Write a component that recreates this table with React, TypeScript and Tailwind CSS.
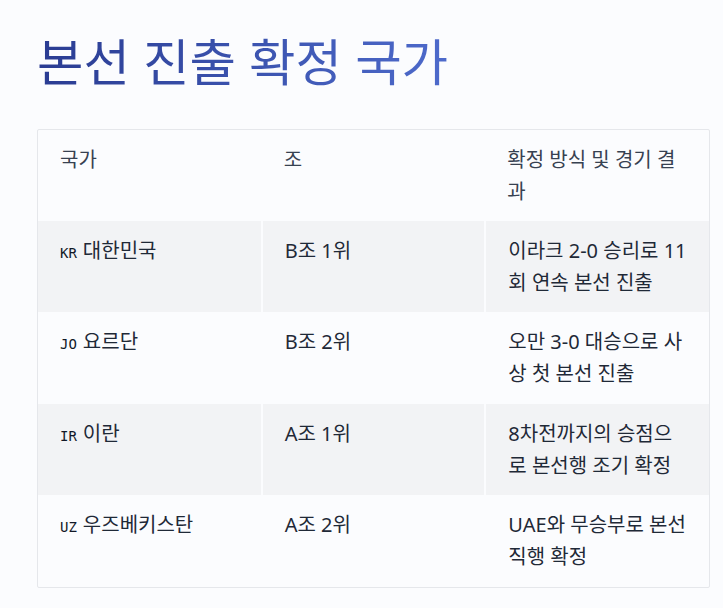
import React from 'react';

interface Row {
    code: string;
    name: string;
    group: string;
    result: string;
}

const rows: Row[] = [
    { code: 'KR', name: '대한민국', group: 'B조 1위', result: '이라크 2-0 승리로 11회 연속 본선 진출' },
    { code: 'JO', name: '요르단', group: 'B조 2위', result: '오만 3-0 대승으로 사상 첫 본선 진출' },
    { code: 'IR', name: '이란', group: 'A조 1위', result: '8차전까지의 승점으로 본선행 조기 확정' },
    { code: 'UZ', name: '우즈베키스탄', group: 'A조 2위', result: 'UAE와 무승부로 본선 직행 확정' },
];

export default function App() {
    return (
        <div
            className="min-h-[608px] bg-[#fbfcfe] pl-[37px] pr-[13px] pt-[32px] pb-[21px]"
            style={{ fontFamily: '"Noto Sans", "Noto Sans CJK KR", sans-serif' }}
        >
            <h1 className="text-[50.5px] leading-[1.2] font-normal bg-gradient-to-r from-[#2a3c92] to-[#4d6acb] bg-clip-text text-transparent w-fit">
                본선 진출 확정 국가
            </h1>

            <div className="mt-[36px] border border-[#e5e7eb] rounded-[2px] overflow-hidden">
                <table className="w-full table-fixed border-collapse text-[20px] leading-[32px]">
                    <thead>
                        <tr className="text-[#374151] text-left">
                            <th className="font-normal align-top px-[22px] pt-[14px] pb-[13.4px]">국가</th>
                            <th className="font-normal align-top px-[22px] pt-[14px] pb-[13.4px]">조</th>
                            <th className="font-normal align-top px-[22px] pt-[14px] pb-[13.4px]">확정 방식 및 경기 결과</th>
                        </tr>
                    </thead>
                    <tbody className="text-[#1f2937]">
                        {rows.map((row, i) => (
                            <tr key={row.code} className={i % 2 === 0 ? 'bg-[#f2f3f5]' : ''}>
                                <td className="align-top px-[22px] pt-[14px] pb-[13.4px] border-r-2 border-[#fbfcfe]">
                                    <span className="text-[14px] text-[#111827] mr-[6px]" style={{ fontFamily: '"DejaVu Sans Mono", monospace' }}>
                                        {row.code}
                                    </span>
                                    {row.name}
                                </td>
                                <td className="align-top px-[22px] pt-[14px] pb-[13.4px] border-r-2 border-[#fbfcfe]">{row.group}</td>
                                <td className="align-top px-[22px] pt-[14px] pb-[13.4px]">{row.result}</td>
                            </tr>
                        ))}
                    </tbody>
                </table>
            </div>
        </div>
    );
}
